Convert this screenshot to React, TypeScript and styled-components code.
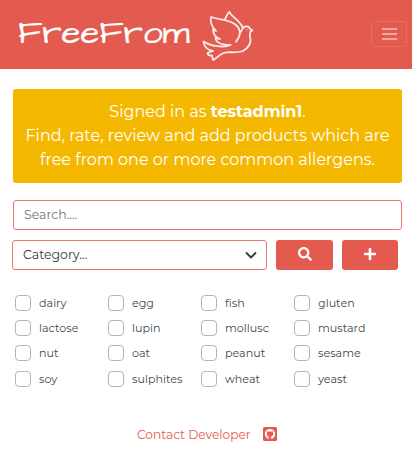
import React from "react";
import styled, { createGlobalStyle } from "styled-components";
import { FaSearch, FaPlus, FaGithubSquare } from "react-icons/fa";

const coral = "#e35b4f";

const GlobalStyle = createGlobalStyle`
  *, *::before, *::after { box-sizing: border-box; }
  body {
    margin: 0;
    background: #fff;
    color: #212529;
    font-family: Montserrat, Inter, "Liberation Sans", sans-serif;
    font-size: 12px;
  }
`;

const Navbar = styled.nav`
  display: flex;
  height: 69px;
  padding: 0 5px 0 18px;
  background: ${coral};
`;

const Brand = styled.a`
  display: flex;
  width: 185px;
  height: 66px;
  align-items: center;
  color: #fff;
  font-family: "Architects Daughter", "Open Sans", sans-serif;
  font-size: 33px;
  text-decoration: none;
  -webkit-text-stroke: 0.2px #fff;
`;

const BrandText = styled.span`
  transform: scaleX(1.06);
  transform-origin: left center;
`;

const Dove = styled.svg`
  width: 50px;
  height: 51px;
  margin-top: 11px;
  fill: none;
  stroke: #fbe9e7;
  stroke-width: 1.8;
  stroke-linecap: round;
  stroke-linejoin: round;
  overflow: visible;
`;

const Toggler = styled.button`
  display: flex;
  width: 36px;
  height: 26px;
  margin: 21px 0 0 auto;
  padding: 0;
  align-items: center;
  justify-content: center;
  border: 1px solid #e66d62;
  border-radius: 3px;
  background: none;
`;

const Bars = styled.span`
  display: grid;
  width: 15px;
  gap: 3px;

  i {
    height: 2px;
    background: #f0a9a3;
  }
`;

const Page = styled.main`
  padding: 20px 10px 0 13px;
`;

const Banner = styled.section`
  height: 94px;
  padding: 11px 0;
  border-radius: 3px;
  background: #f5b800;
  color: #fff;
`;

const BannerLine = styled.p`
  margin: 0;
  font-size: 16px;
  line-height: 24px;
  text-align: center;
  white-space: nowrap;
`;

const SearchInput = styled.input`
  display: block;
  width: 100%;
  height: 30px;
  margin-top: 17px;
  padding: 0 10px 2px;
  border: 1px solid #e8776d;
  border-radius: 3px;
  outline: none;
  font: inherit;
  font-size: 12.5px;

  &::placeholder { color: #6c757d; opacity: 1; }
`;

const FilterRow = styled.div`
  display: flex;
  gap: 9px;
  margin: 10px 0 0 -1px;
`;

const Select = styled.button`
  display: flex;
  width: 255px;
  height: 30px;
  padding: 0 9px 1px 10px;
  align-items: center;
  justify-content: space-between;
  border: 1px solid #e8776d;
  border-radius: 3px;
  background: #fff;
  color: #343a40;
  font: inherit;
  font-size: 12.5px;
`;

const Chevron = styled.svg`
  width: 12px;
  height: 12px;
  fill: none;
  stroke: #343a40;
  stroke-width: 1.8;
  stroke-linecap: round;
  stroke-linejoin: round;
`;

const ActionButton = styled.button<{ $width: number }>`
  display: flex;
  width: ${(p) => p.$width}px;
  height: 30px;
  padding: 0 0 2px;
  align-items: center;
  justify-content: center;
  border: 0;
  border-radius: 3px;
  background: ${coral};
  color: #fff;
  font-size: 14px;
`;

const AllergenGrid = styled.div`
  display: grid;
  grid-template-columns: repeat(4, 93px);
  grid-auto-rows: 25.3px;
  margin: 20px 0 0 2px;
`;

const Allergen = styled.label`
  display: flex;
  align-items: center;
  gap: 8px;
  font-size: 11.15px;
  color: #42474c;
`;

const Checkbox = styled.input`
  width: 16px;
  height: 16px;
  margin: 0;
  flex: none;
  appearance: none;
  border: 1px solid #b5b5b5;
  border-radius: 4px;
  background: #fff;
`;

const Footer = styled.footer`
  display: flex;
  height: 16px;
  margin: 35px 0 0 124px;
  align-items: center;
  color: ${coral};
`;

const ContactLink = styled.a`
  width: 125px;
  color: inherit;
  font-size: 12.2px;
  text-decoration: none;
  white-space: nowrap;
`;

const allergens = [
  "dairy", "egg", "fish", "gluten",
  "lactose", "lupin", "mollusc", "mustard",
  "nut", "oat", "peanut", "sesame",
  "soy", "sulphites", "wheat", "yeast",
];

export default function App() {
  return (
    <>
      <GlobalStyle />
      <Navbar>
        <Brand><BrandText>FreeFrom</BrandText></Brand>
        <Dove viewBox="0 0 50 51">
          <path d="M33 30.7C35 28 37 25 36.8 22C37 15 30 11 23.7 9.7C18 8 13 8 8 6C7 11 9 16 13 20L10 18.5C10 23 12 26 17 28L12.5 27C13 32 20 34 27.7 34C21 37 14 35 10 34.5C6 34 3 32 .5 30.5C1 36 4 39 10 40L4.5 42C5 44 6 45 9 44.5L10 49C14 48 16 42 23.7 41.3C31 41 35 42 40 40C45 37 48 33 47.5 28C47 25 46 24 47.3 21L49.3 19.3L47 18C46 14.5 41 14.5 39.5 18C38 20 38 21 37 22" />
          <path d="M21.7 9C23 6 24 3 26.3 .8C29 6 36 9 39.5 16" />
          <circle cx="44" cy="18.8" r=".5" fill="#fff" stroke="none" />
        </Dove>
        <Toggler aria-label="Toggle navigation"><Bars><i /><i /><i /></Bars></Toggler>
      </Navbar>
      <Page>
        <Banner>
          <BannerLine>Signed in as <strong>testadmin1</strong>.</BannerLine>
          <BannerLine>Find, rate, review and add products which are</BannerLine>
          <BannerLine>free from one or more common allergens.</BannerLine>
        </Banner>
        <SearchInput placeholder="Search...." />
        <FilterRow>
          <Select>
            Category...
            <Chevron viewBox="0 0 12 12"><path d="M1.5 4L6 8.5L10.5 4" /></Chevron>
          </Select>
          <ActionButton $width={57} aria-label="Search"><FaSearch /></ActionButton>
          <ActionButton $width={56} aria-label="Add"><FaPlus /></ActionButton>
        </FilterRow>
        <AllergenGrid>
          {allergens.map((name) => (
            <Allergen key={name}><Checkbox type="checkbox" />{name}</Allergen>
          ))}
        </AllergenGrid>
        <Footer>
          <ContactLink>Contact Developer</ContactLink>
          <FaGithubSquare size={16} />
        </Footer>
      </Page>
    </>
  );
}
